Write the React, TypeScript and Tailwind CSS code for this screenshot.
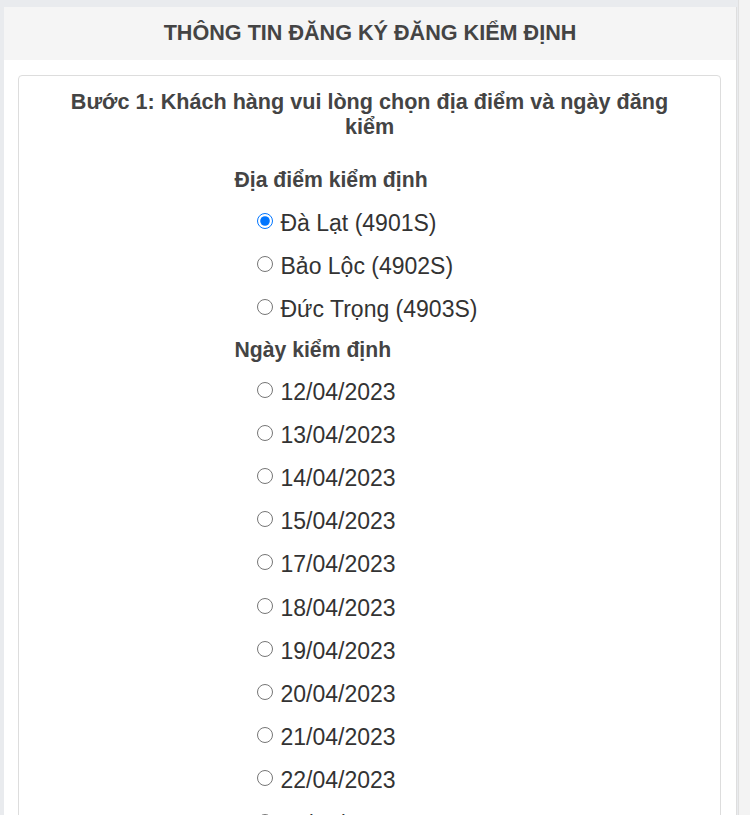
import React from "react";

const places = ["Đà Lạt (4901S)", "Bảo Lộc (4902S)", "Đức Trọng (4903S)"];
const dates = [
  "12/04/2023",
  "13/04/2023",
  "14/04/2023",
  "15/04/2023",
  "17/04/2023",
  "18/04/2023",
  "19/04/2023",
  "20/04/2023",
  "21/04/2023",
  "22/04/2023",
  "24/04/2023",
];

function Option({ name, label, checked }: { name: string; label: string; checked?: boolean }) {
  return (
    <label className="flex h-[43.2px] items-center pl-[22px] text-[23px] text-[#333]">
      <input
        type="radio"
        name={name}
        defaultChecked={checked}
        className="m-0 h-[16px] w-[16px] -translate-y-[1px]"
      />
      <span className="ml-[8px] translate-y-[1px] leading-[26px]">{label}</span>
    </label>
  );
}

export default function App() {
  return (
    <div className="flex h-[815px] overflow-hidden bg-[#e9ebee] font-['Liberation_Sans',Arial,sans-serif]">
      <div className="flex-1 pl-[4px] pr-[1px] pt-[7px]">
        <div className="h-full border-r border-[#dedede] bg-white">
          <div className="flex h-[53px] items-center justify-center bg-[#f5f5f5] text-[21.6px] font-bold text-[#444]">
            THÔNG TIN ĐĂNG KÝ ĐĂNG KIỂM ĐỊNH
          </div>
          <div className="pl-[14px] pr-[15px] pt-[15px]">
            <div className="h-[900px] rounded-[4px] border border-[#dddddd] pt-[13px]">
              <h2 className="px-[30px] text-center text-[21.6px] font-bold leading-[25px] text-[#444]">
                Bước 1: Khách hàng vui lòng chọn địa điểm và ngày đăng kiểm
              </h2>
              <div className="mx-auto mt-[20px] w-[270px]">
                <div className="flex h-[41px] items-center text-[21.2px] font-bold text-[#444]">
                  Địa điểm kiểm định
                </div>
                {places.map((p, i) => (
                  <Option key={p} name="place" label={p} checked={i === 0} />
                ))}
                <div className="flex h-[39.5px] items-center pt-[1px] text-[21.2px] font-bold text-[#444]">
                  Ngày kiểm định
                </div>
                {dates.map((d) => (
                  <Option key={d} name="date" label={d} />
                ))}
              </div>
            </div>
          </div>
        </div>
      </div>
      <div className="w-[12px] border-l border-[#e0e0e0] bg-[#f3f3f3]" />
    </div>
  );
}
